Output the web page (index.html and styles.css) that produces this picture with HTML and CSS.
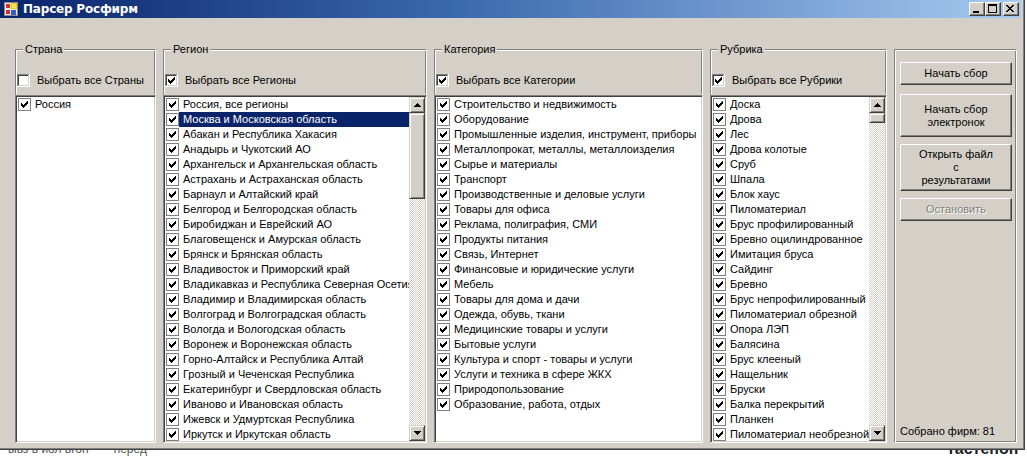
FILE: index.html
```html
<!DOCTYPE html>
<html lang="ru">
<head>
<meta charset="utf-8">
<title>Парсер Росфирм</title>
<link rel="stylesheet" href="styles.css">
</head>
<body>
<svg class="defs" width="0" height="0" aria-hidden="true">
  <defs>
    <path id="tick" fill="#000" d="M9 3h1v1h-1zM8 4h2v1h-2zM3 5h1v1h-1zM7 5h3v1h-3zM3 6h2v1h-2zM6 6h3v1h-3zM3 7h5v1h-5zM4 8h3v1h-3zM5 9h1v1h-1z"/>
    <symbol id="box3d" viewBox="0 0 13 13">
      <rect width="13" height="13" fill="#fff"/>
      <path fill="#808080" d="M0 0h12v1h-11v11h-1z"/>
      <path fill="#404040" d="M1 1h10v1h-9v9h-1z"/>
      <path fill="#d4d0c8" d="M11 1h1v11h-11v-1h10z"/>
    </symbol>
    <symbol id="box3dc" viewBox="0 0 13 13">
      <use href="#box3d"/>
      <use href="#tick"/>
    </symbol>
    <symbol id="cbl" viewBox="0 0 13 13">
      <rect width="13" height="13" fill="#808080"/>
      <rect x="1" y="1" width="11" height="11" fill="#fff"/>
      <use href="#tick"/>
    </symbol>
    <symbol id="up" viewBox="0 0 7 4">
      <path fill="#000" d="M3 0h1v1h1v1h1v1h1v1h-7v-1h1v-1h1v-1h1z"/>
    </symbol>
    <symbol id="down" viewBox="0 0 7 4">
      <path fill="#000" d="M0 0h7v1h-1v1h-1v1h-1v1h-1v-1h-1v-1h-1v-1h-1z"/>
    </symbol>
  </defs>
</svg>

<div class="window">
  <div class="frame">
    <div class="titlebar">
      <svg class="appicon" width="14" height="14" viewBox="0 0 14 14" shape-rendering="crispEdges">
        <rect width="14" height="14" fill="#8c8c8c"/>
        <rect x="1" y="1" width="12" height="12" fill="#e8e8e8"/>
        <rect x="2" y="2" width="4" height="4" fill="#d03030"/>
        <rect x="7" y="1" width="6" height="6" fill="#f8c800"/>
        <rect x="8" y="2" width="4" height="4" fill="#ffe050"/>
        <rect x="2" y="8" width="4" height="4" fill="#d03030"/>
        <rect x="7" y="8" width="5" height="5" fill="#3060c0"/>
      </svg>
      <span class="title">Парсер Росфирм</span>
      <div class="wbtns">
        <div class="wbtn"><svg width="14" height="12" viewBox="0 0 14 12" shape-rendering="crispEdges"><path d="M3 8h6v2h-6z" fill="#000"/></svg></div>
        <div class="wbtn"><svg width="14" height="12" viewBox="0 0 14 12" shape-rendering="crispEdges"><path d="M2 1h9v9h-9zM3 3v6h7v-6z" fill="#000" fill-rule="evenodd"/></svg></div>
        <div class="wbtn close"><svg width="14" height="12" viewBox="0 0 14 12" shape-rendering="crispEdges"><path fill="#000" d="M2 2h2v1h-2zM8 2h2v1h-2zM3 3h2v1h-2zM7 3h2v1h-2zM4 4h4v1h-4zM5 5h2v1h-2zM4 6h4v1h-4zM3 7h2v1h-2zM7 7h2v1h-2zM2 8h2v1h-2zM8 8h2v1h-2z"/></svg></div>
      </div>
    </div>

    <div class="client">
      <section class="col c1">
        <div class="ghead">
          <span class="legend">Страна</span>
          <label class="selall"><svg class="cb"><use href="#box3d"/></svg><span>Выбрать все Страны</span></label>
        </div>
        <div class="listbox">
          <ul class="items">
            <li><svg class="cb"><use href="#cbl"/></svg><span>Россия</span></li>
          </ul>
        </div>
      </section>

      <section class="col c2">
        <div class="ghead">
          <span class="legend">Регион</span>
          <label class="selall"><svg class="cb"><use href="#box3dc"/></svg><span>Выбрать все Регионы</span></label>
        </div>
        <div class="listbox">
          <ul class="items">
            <li><svg class="cb"><use href="#cbl"/></svg><span>Россия, все регионы</span></li>
            <li class="sel"><svg class="cb"><use href="#cbl"/></svg><span>Москва и Московская область</span></li>
            <li><svg class="cb"><use href="#cbl"/></svg><span>Абакан и Республика Хакасия</span></li>
            <li><svg class="cb"><use href="#cbl"/></svg><span>Анадырь и Чукотский АО</span></li>
            <li><svg class="cb"><use href="#cbl"/></svg><span>Архангельск и Архангельская область</span></li>
            <li><svg class="cb"><use href="#cbl"/></svg><span>Астрахань и Астраханская область</span></li>
            <li><svg class="cb"><use href="#cbl"/></svg><span>Барнаул и Алтайский край</span></li>
            <li><svg class="cb"><use href="#cbl"/></svg><span>Белгород и Белгородская область</span></li>
            <li><svg class="cb"><use href="#cbl"/></svg><span>Биробиджан и Еврейский АО</span></li>
            <li><svg class="cb"><use href="#cbl"/></svg><span>Благовещенск и Амурская область</span></li>
            <li><svg class="cb"><use href="#cbl"/></svg><span>Брянск и Брянская область</span></li>
            <li><svg class="cb"><use href="#cbl"/></svg><span>Владивосток и Приморский край</span></li>
            <li><svg class="cb"><use href="#cbl"/></svg><span>Владикавказ и Республика Северная Осетия</span></li>
            <li><svg class="cb"><use href="#cbl"/></svg><span>Владимир и Владимирская область</span></li>
            <li><svg class="cb"><use href="#cbl"/></svg><span>Волгоград и Волгоградская область</span></li>
            <li><svg class="cb"><use href="#cbl"/></svg><span>Вологда и Вологодская область</span></li>
            <li><svg class="cb"><use href="#cbl"/></svg><span>Воронеж и Воронежская область</span></li>
            <li><svg class="cb"><use href="#cbl"/></svg><span>Горно-Алтайск и Республика Алтай</span></li>
            <li><svg class="cb"><use href="#cbl"/></svg><span>Грозный и Чеченская Республика</span></li>
            <li><svg class="cb"><use href="#cbl"/></svg><span>Екатеринбург и Свердловская область</span></li>
            <li><svg class="cb"><use href="#cbl"/></svg><span>Иваново и Ивановская область</span></li>
            <li><svg class="cb"><use href="#cbl"/></svg><span>Ижевск и Удмуртская Республика</span></li>
            <li><svg class="cb"><use href="#cbl"/></svg><span>Иркутск и Иркутская область</span></li>
          </ul>
          <div class="scrollbar">
            <div class="sbtn"><svg width="7" height="4"><use href="#up"/></svg></div>
            <div class="thumb t-region"></div>
            <div class="track"></div>
            <div class="sbtn"><svg width="7" height="4"><use href="#down"/></svg></div>
          </div>
        </div>
      </section>

      <section class="col c3">
        <div class="ghead">
          <span class="legend">Категория</span>
          <label class="selall"><svg class="cb"><use href="#box3dc"/></svg><span>Выбрать все Категории</span></label>
        </div>
        <div class="listbox">
          <ul class="items">
            <li><svg class="cb"><use href="#cbl"/></svg><span>Строительство и недвижимость</span></li>
            <li><svg class="cb"><use href="#cbl"/></svg><span>Оборудование</span></li>
            <li><svg class="cb"><use href="#cbl"/></svg><span>Промышленные изделия, инструмент, приборы</span></li>
            <li><svg class="cb"><use href="#cbl"/></svg><span>Металлопрокат, металлы, металлоизделия</span></li>
            <li><svg class="cb"><use href="#cbl"/></svg><span>Сырье и материалы</span></li>
            <li><svg class="cb"><use href="#cbl"/></svg><span>Транспорт</span></li>
            <li><svg class="cb"><use href="#cbl"/></svg><span>Производственные и деловые услуги</span></li>
            <li><svg class="cb"><use href="#cbl"/></svg><span>Товары для офиса</span></li>
            <li><svg class="cb"><use href="#cbl"/></svg><span>Реклама, полиграфия, СМИ</span></li>
            <li><svg class="cb"><use href="#cbl"/></svg><span>Продукты питания</span></li>
            <li><svg class="cb"><use href="#cbl"/></svg><span>Связь, Интернет</span></li>
            <li><svg class="cb"><use href="#cbl"/></svg><span>Финансовые и юридические услуги</span></li>
            <li><svg class="cb"><use href="#cbl"/></svg><span>Мебель</span></li>
            <li><svg class="cb"><use href="#cbl"/></svg><span>Товары для дома и дачи</span></li>
            <li><svg class="cb"><use href="#cbl"/></svg><span>Одежда, обувь, ткани</span></li>
            <li><svg class="cb"><use href="#cbl"/></svg><span>Медицинские товары и услуги</span></li>
            <li><svg class="cb"><use href="#cbl"/></svg><span>Бытовые услуги</span></li>
            <li><svg class="cb"><use href="#cbl"/></svg><span>Культура и спорт - товары и услуги</span></li>
            <li><svg class="cb"><use href="#cbl"/></svg><span>Услуги и техника в сфере ЖКХ</span></li>
            <li><svg class="cb"><use href="#cbl"/></svg><span>Природопользование</span></li>
            <li><svg class="cb"><use href="#cbl"/></svg><span>Образование, работа, отдых</span></li>
          </ul>
        </div>
      </section>

      <section class="col c4">
        <div class="ghead">
          <span class="legend">Рубрика</span>
          <label class="selall"><svg class="cb"><use href="#box3dc"/></svg><span>Выбрать все Рубрики</span></label>
        </div>
        <div class="listbox">
          <ul class="items">
            <li><svg class="cb"><use href="#cbl"/></svg><span>Доска</span></li>
            <li><svg class="cb"><use href="#cbl"/></svg><span>Дрова</span></li>
            <li><svg class="cb"><use href="#cbl"/></svg><span>Лес</span></li>
            <li><svg class="cb"><use href="#cbl"/></svg><span>Дрова колотые</span></li>
            <li><svg class="cb"><use href="#cbl"/></svg><span>Сруб</span></li>
            <li><svg class="cb"><use href="#cbl"/></svg><span>Шпала</span></li>
            <li><svg class="cb"><use href="#cbl"/></svg><span>Блок хаус</span></li>
            <li><svg class="cb"><use href="#cbl"/></svg><span>Пиломатериал</span></li>
            <li><svg class="cb"><use href="#cbl"/></svg><span>Брус профилированный</span></li>
            <li><svg class="cb"><use href="#cbl"/></svg><span>Бревно оцилиндрованное</span></li>
            <li><svg class="cb"><use href="#cbl"/></svg><span>Имитация бруса</span></li>
            <li><svg class="cb"><use href="#cbl"/></svg><span>Сайдинг</span></li>
            <li><svg class="cb"><use href="#cbl"/></svg><span>Бревно</span></li>
            <li><svg class="cb"><use href="#cbl"/></svg><span>Брус непрофилированный</span></li>
            <li><svg class="cb"><use href="#cbl"/></svg><span>Пиломатериал обрезной</span></li>
            <li><svg class="cb"><use href="#cbl"/></svg><span>Опора ЛЭП</span></li>
            <li><svg class="cb"><use href="#cbl"/></svg><span>Балясина</span></li>
            <li><svg class="cb"><use href="#cbl"/></svg><span>Брус клееный</span></li>
            <li><svg class="cb"><use href="#cbl"/></svg><span>Нащельник</span></li>
            <li><svg class="cb"><use href="#cbl"/></svg><span>Бруски</span></li>
            <li><svg class="cb"><use href="#cbl"/></svg><span>Балка перекрытий</span></li>
            <li><svg class="cb"><use href="#cbl"/></svg><span>Планкен</span></li>
            <li><svg class="cb"><use href="#cbl"/></svg><span>Пиломатериал необрезной</span></li>
          </ul>
          <div class="scrollbar">
            <div class="sbtn"><svg width="7" height="4"><use href="#up"/></svg></div>
            <div class="thumb t-rubric"></div>
            <div class="track"></div>
            <div class="sbtn"><svg width="7" height="4"><use href="#down"/></svg></div>
          </div>
        </div>
      </section>

      <section class="panel">
        <button class="btn b1">Начать сбор</button>
        <button class="btn b2">Начать сбор<br>электронок</button>
        <button class="btn b3">Открыть файл<br>с<br>результатами</button>
        <button class="btn b4" disabled>Остановить</button>
        <div class="count">Собрано фирм: 81</div>
      </section>
    </div>
  </div>
</div>
<div class="desk">
  <span class="d1">ывз в иол вгон</span><span class="d2">перед</span><span class="d3">тастепоп</span>
</div>
</body>
</html>
```
FILE: styles.css
```css
html, body { margin: 0; padding: 0; }
body {
  width: 1027px; height: 457px; overflow: hidden;
  background: #fff;
  font-family: "Liberation Sans", Arial, sans-serif;
  font-size: 11px; color: #000;
}
.defs { display: block; width: 0; height: 0; overflow: hidden; }
svg { shape-rendering: crispEdges; }

.window {
  width: 1025px; height: 450px; box-sizing: border-box;
  border-right: 1px solid #404040; border-bottom: 1px solid #404040;
  background: #d4d0c8;
}
.frame {
  height: 100%; box-sizing: border-box;
  border-right: 1px solid #808080; border-bottom: 1px solid #808080;
  padding: 0 2px 2px 0;
  display: flex; flex-direction: column;
}

.titlebar {
  height: 18px; flex: none;
  background: linear-gradient(to right, #0a246a 0%, #3a6aae 45%, #a6caf0 100%);
  display: flex; align-items: center;
}
.appicon { margin-left: 4px; flex: none; }
.title {
  margin-left: 5px; color: #fff; font-weight: bold; font-size: 12px;
  font-family: "DejaVu Sans", "Liberation Sans", sans-serif; letter-spacing: -0.2px;
}
.wbtns { margin-left: auto; margin-right: 2px; display: flex; }
.wbtn {
  width: 16px; height: 14px; box-sizing: border-box;
  border: 1px solid; border-color: #fff #404040 #404040 #fff;
  box-shadow: inset -1px -1px 0 #808080;
  background: #d4d0c8;
  display: flex;
}
.wbtn svg { display: block; }
.wbtn.close { margin-left: 2px; }

.client { flex: 1; display: flex; gap: 7px; padding: 31px 0 0 15px; }

.col { display: flex; flex-direction: column; }
.c1 { width: 141px; }
.c2 { width: 264px; }
.c3 { width: 269px; }
.c4 { width: 177px; }

.ghead {
  position: relative; height: 46px; box-sizing: border-box;
  border: 1px solid; border-color: #808080 #fff transparent #808080;
  box-shadow: inset 1px 1px 0 #fff, inset -1px 0 0 #808080;
  padding: 23px 0 0 1px;
}
.legend {
  position: absolute; top: -8px; left: 7px;
  background: #d4d0c8; padding: 0 2px; line-height: 14px;
}
.selall { display: flex; align-items: center; height: 15px; }
.selall span { margin-left: 7px; line-height: 15px; }
.cb { width: 13px; height: 13px; flex: none; display: block; }

.listbox {
  height: 348px; box-sizing: border-box;
  border: 1px solid; border-color: #808080 #fff #fff #808080;
  box-shadow: inset 1px 1px 0 #404040, inset -1px -1px 0 #d4d0c8;
  padding: 1px;
  background: #fff;
  display: flex;
}
.items {
  list-style: none; margin: 0; padding: 0;
  flex: 1; min-width: 0; overflow: hidden;
}
.items li {
  height: 15px; display: flex; align-items: center;
  padding-left: 1px; white-space: nowrap;
}
.items li span {
  flex: 1; min-width: 0; overflow: hidden;
  padding-left: 4px; line-height: 15px; height: 15px;
}
.items li.sel span { background: #0a246a; color: #fff; }

.scrollbar { width: 16px; flex: none; display: flex; flex-direction: column; }
.sbtn, .thumb {
  box-sizing: border-box; background: #d4d0c8;
  border: 1px solid; border-color: #d4d0c8 #404040 #404040 #d4d0c8;
  box-shadow: inset 1px 1px 0 #fff, inset -1px -1px 0 #808080;
}
.sbtn { height: 16px; flex: none; display: flex; align-items: center; justify-content: center; }
.sbtn svg { display: block; }
.t-region { height: 86px; flex: none; }
.t-rubric { height: 10px; flex: none; }
.track {
  flex: 1;
  background: repeating-conic-gradient(#d4d0c8 0 25%, #fff 0 50%) 0 0 / 2px 2px;
}

.panel {
  width: 123px; height: 394px; box-sizing: border-box;
  border: 1px solid; border-color: #808080 #fff #fff #808080;
  box-shadow: inset 1px 1px 0 #fff, inset -1px -1px 0 #808080;
  padding: 12px 0 0 5px;
  display: flex; flex-direction: column; align-items: flex-start;
}
.btn {
  width: 112px; box-sizing: border-box; margin: 0; padding: 0;
  font: inherit; color: #000; background: #d4d0c8; text-align: center;
  line-height: 13px;
  border: 1px solid; border-color: #fff #404040 #404040 #fff;
  box-shadow: inset -1px -1px 0 #808080;
}
.b1 { height: 23px; }
.b2 { height: 43px; margin-top: 9px; }
.b3 { height: 47px; margin-top: 7px; }
.b4 { height: 23px; margin-top: 7px; color: #808080; text-shadow: 1px 1px 0 #fff; }
.count { margin-top: auto; margin-bottom: 4px; line-height: 13px; }

.desk {
  height: 7px; overflow: hidden; display: flex; align-items: flex-start;
  color: #555; font-size: 12px;
}
.desk span { margin-top: -8px; line-height: 14px; }
.d1 { margin-left: 8px; }
.d2 { margin-left: 25px; }
.d3 { margin-left: 800px; font-size: 16px; font-weight: bold; color: #222; }
```
